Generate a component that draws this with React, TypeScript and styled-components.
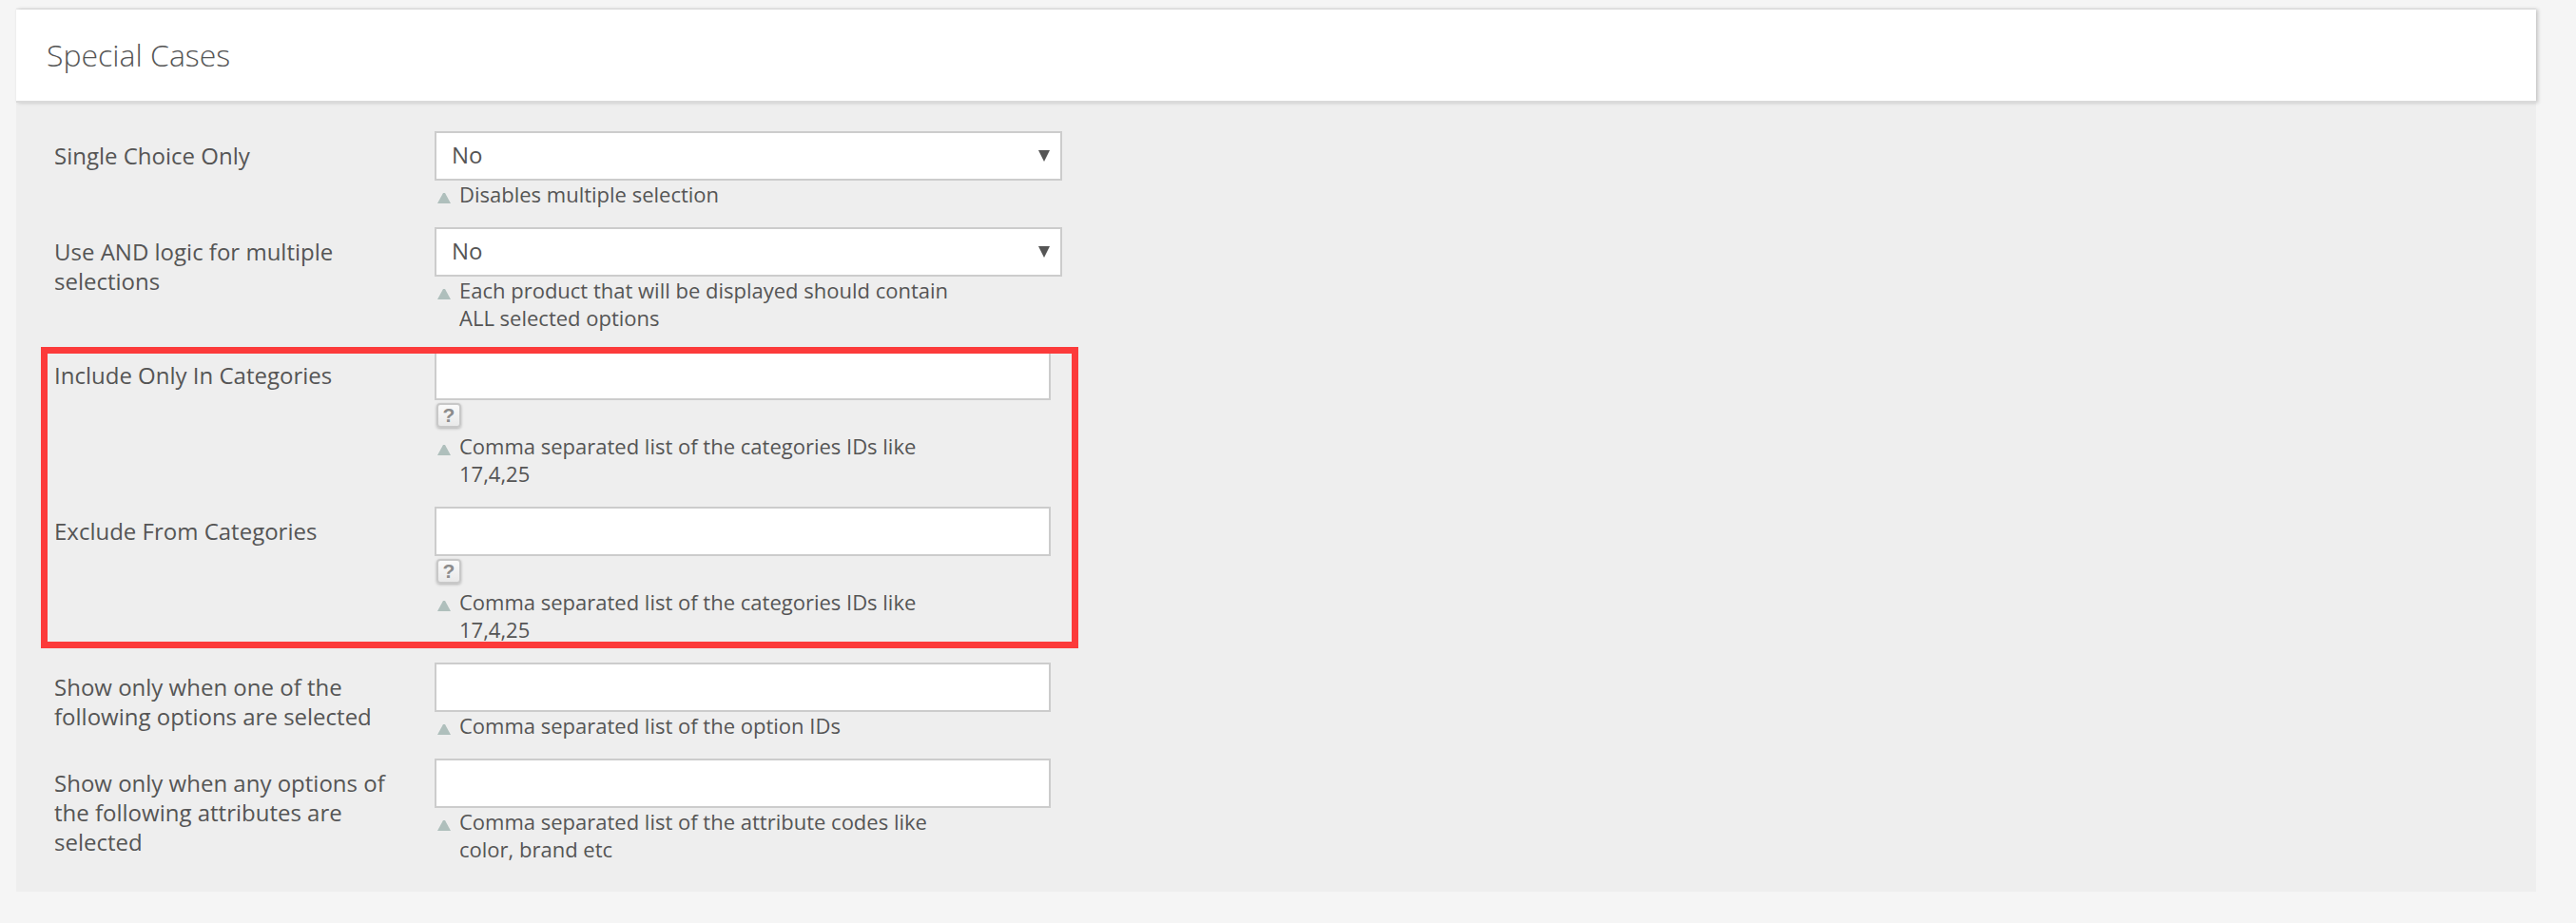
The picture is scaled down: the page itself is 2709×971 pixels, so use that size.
import React, { useId } from "react";
import styled, { createGlobalStyle } from "styled-components";

const GlobalStyle = createGlobalStyle`
  *, *::before, *::after { box-sizing: border-box; }
  body {
    margin: 0;
    background: #f5f5f5;
    color: #555;
    font-family: "Open Sans", "Liberation Sans", sans-serif;
  }
`;

const Page = styled.main`
  padding: 10px 42px 32px 17px;
`;

const Panel = styled.section`
  background: #eee;
`;

const PanelHeader = styled.header`
  position: relative;
  padding: 24px 32px;
  background: #fff;
  border-bottom: 2px solid #dadada;
  box-shadow: 2px 0 4px rgba(0, 0, 0, 0.2), 0 -1px 1px rgba(0, 0, 0, 0.05);
`;

const Title = styled.h2`
  margin: 0;
  font-size: 32px;
  line-height: 48px;
  font-weight: 300;
`;

const Form = styled.form`
  display: flex;
  flex-direction: column;
  gap: 20px;
  padding: 30px 40px;
`;

const Highlight = styled.div`
  position: relative;
  display: flex;
  flex-direction: column;
  gap: 20px;
  max-width: 1060px;

  &::after {
    content: "";
    position: absolute;
    inset: -4px -17px -5px -14px;
    border: 7px solid #fc3a3a;
    pointer-events: none;
  }
`;

const Row = styled.div`
  display: grid;
  grid-template-columns: 400px minmax(0, 660px);
  align-items: start;
`;

const Label = styled.label`
  max-width: 370px;
  padding-top: 10px;
  font-size: 24px;
  line-height: 31px;
`;

const SelectWrap = styled.div`
  display: grid;
  align-items: center;

  & > * { grid-area: 1 / 1; }
`;

const Select = styled.select`
  appearance: none;
  width: 100%;
  height: 52px;
  padding: 0 40px 3px 16px;
  border: 2px solid #ccc;
  border-radius: 0;
  background: #fff;
  color: #555;
  font: inherit;
  font-size: 24px;
`;

const Arrow = styled.svg`
  justify-self: end;
  margin-right: 13px;
  pointer-events: none;
`;

const InputWrap = styled.div`
  padding-right: 12px;
`;

const Input = styled.input`
  display: block;
  width: 100%;
  height: 52px;
  padding: 0 16px;
  border: 2px solid #ccc;
  border-radius: 0;
  background: #fff;
  color: #555;
  font: inherit;
  font-size: 24px;
`;

const HelpLine = styled.div`
  height: 34px;
  padding: 3px 2px;
`;

const HelpButton = styled.button`
  display: block;
  width: 26px;
  height: 26px;
  padding: 0;
  border: 2px solid #c8c8c8;
  border-radius: 4px;
  background: linear-gradient(#fafafa, #e9e9e9);
  box-shadow: 0 1px 3px rgba(0, 0, 0, 0.25);
  color: #8c8c8c;
  font-family: "Liberation Sans", sans-serif;
  font-size: 21px;
  font-weight: 700;
  line-height: 22px;
`;

const Note = styled.p`
  display: flex;
  gap: 9px;
  max-width: 566px;
  margin: 0;
  padding-left: 3px;
  font-size: 22px;
  line-height: 29px;
`;

const Marker = styled.svg`
  flex: none;
  margin-top: 13px;
`;

type FieldProps = {
  label: string;
  note: string;
  kind?: "select" | "text";
  help?: boolean;
};

function Field({ label, note, kind = "text", help = false }: FieldProps) {
  const id = useId();
  return (
    <Row>
      <Label htmlFor={id}>{label}</Label>
      <div>
        {kind === "select" ? (
          <SelectWrap>
            <Select id={id} defaultValue="No" aria-describedby={`${id}-note`}>
              <option>No</option>
              <option>Yes</option>
            </Select>
            <Arrow width="12" height="12" viewBox="0 0 12 12" aria-hidden="true">
              <path d="M0 0H12L6 12Z" fill="#555" />
            </Arrow>
          </SelectWrap>
        ) : (
          <InputWrap>
            <Input id={id} type="text" aria-describedby={`${id}-note`} />
          </InputWrap>
        )}
        {help && (
          <HelpLine>
            <HelpButton type="button">?</HelpButton>
          </HelpLine>
        )}
        <Note id={`${id}-note`}>
          <Marker width="14" height="11" viewBox="0 0 14 11" aria-hidden="true">
            <path d="M6 0H8L14 11H0Z" fill="#afbfbc" />
          </Marker>
          <span>{note}</span>
        </Note>
      </div>
    </Row>
  );
}

export default function App() {
  return (
    <>
      <GlobalStyle />
      <Page>
        <Panel>
          <PanelHeader>
            <Title>Special Cases</Title>
          </PanelHeader>
          <Form>
            <Field kind="select" label="Single Choice Only" note="Disables multiple selection" />
            <Field
              kind="select"
              label="Use AND logic for multiple selections"
              note="Each product that will be displayed should contain ALL selected options"
            />
            <Highlight>
              <Field
                help
                label="Include Only In Categories"
                note="Comma separated list of the categories IDs like 17,4,25"
              />
              <Field
                help
                label="Exclude From Categories"
                note="Comma separated list of the categories IDs like 17,4,25"
              />
            </Highlight>
            <Field
              label="Show only when one of the following options are selected"
              note="Comma separated list of the option IDs"
            />
            <Field
              label="Show only when any options of the following attributes are selected"
              note="Comma separated list of the attribute codes like color, brand etc"
            />
          </Form>
        </Panel>
      </Page>
    </>
  );
}
